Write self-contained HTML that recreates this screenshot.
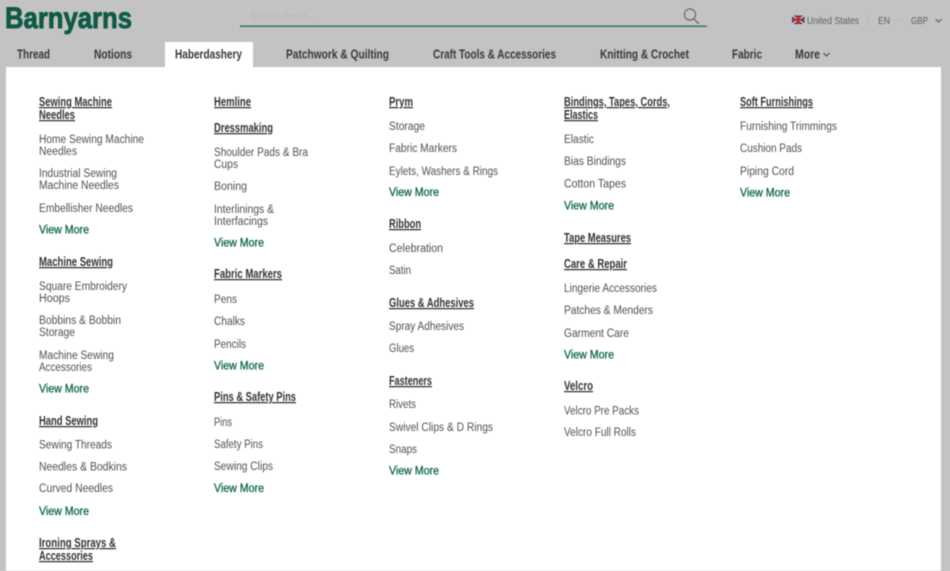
<!DOCTYPE html>
<html lang="en"><head><meta charset="utf-8"><title>Barnyarns</title>
<style>
html,body{margin:0;padding:0;width:950px;height:571px;overflow:hidden;background:#c3c3c3}
svg{display:block;filter:blur(.4px)}
text{font-family:"Liberation Sans",sans-serif;white-space:pre}
.i{font-size:11.5px;fill:#505050}
.h{font-size:12.5px;font-weight:bold;fill:#333;text-decoration:underline}
.v{font-size:11.5px;fill:#0f6650;stroke:#0f6650;stroke-width:.3}
.n{font-size:13px;font-weight:bold;fill:#383838}
.t{font-size:10px;fill:#5f5f5f}
</style></head><body>
<svg xmlns="http://www.w3.org/2000/svg" width="950" height="571" viewBox="0 0 950 571">
<rect width="950" height="571" fill="#c3c3c3"/>
<rect x="6" y="67" width="935" height="504" fill="#fff"/>
<rect x="165" y="42" width="88" height="25" fill="#fff"/>

<text x="5" y="28" font-size="30" font-weight="bold" fill="#0f5a45" textLength="127" lengthAdjust="spacingAndGlyphs" stroke="#0f5a45" stroke-width=".9">Barnyarns</text>
<text x="250" y="19" font-size="10" fill="#b4bab7" textLength="66" lengthAdjust="spacingAndGlyphs">Search items...</text>
<rect x="240" y="25.500" width="467" height="1.400" fill="#2f7059"/>
<circle cx="690" cy="14.500" r="5.600" fill="none" stroke="#5c5c5c" stroke-width="1"/>
<path d="M694 19l5 5" stroke="#5c5c5c" stroke-width="1.200" fill="none"/>

<rect x="792" y="15.500" width="12.500" height="8.500" fill="#2c3a70"/>
<path d="M792 15.500l12.500 8.500M804.500 15.500l-12.500 8.500" stroke="#d8c8cc" stroke-width="1.500"/>
<path d="M798.200 15.500v8.500M792 19.700h12.500" stroke="#c0272d" stroke-width="2.400"/>
<text class="t" x="807" y="24" textLength="52" lengthAdjust="spacingAndGlyphs">United States</text>
<rect x="868" y="15" width="1" height="9" fill="#b5b5b5"/>
<text class="t" x="878" y="24" textLength="12" lengthAdjust="spacingAndGlyphs">EN</text>
<rect x="898" y="20" width="5" height="1" fill="#b5b5b5"/>
<text class="t" x="911" y="24" textLength="17" lengthAdjust="spacingAndGlyphs">GBP</text>
<path d="M935.500 19l3 3 3-3" fill="none" stroke="#555" stroke-width="1"/>

<text class="n" x="17" y="58.500" textLength="33" lengthAdjust="spacingAndGlyphs">Thread</text>
<text class="n" x="94" y="58.500" textLength="38" lengthAdjust="spacingAndGlyphs">Notions</text>
<text class="n" x="175" y="58.500" textLength="67" lengthAdjust="spacingAndGlyphs">Haberdashery</text>
<text class="n" x="286" y="58.500" textLength="103" lengthAdjust="spacingAndGlyphs">Patchwork &amp; Quilting</text>
<text class="n" x="433" y="58.500" textLength="123" lengthAdjust="spacingAndGlyphs">Craft Tools &amp; Accessories</text>
<text class="n" x="600" y="58.500" textLength="89" lengthAdjust="spacingAndGlyphs">Knitting &amp; Crochet</text>
<text class="n" x="732" y="58.500" textLength="30" lengthAdjust="spacingAndGlyphs">Fabric</text>
<text class="n" x="795" y="58.500" textLength="25" lengthAdjust="spacingAndGlyphs">More</text>
<path d="M823.500 53l3 3 3-3" fill="none" stroke="#444" stroke-width="1"/>

<text class="h" x="39" y="106" textLength="73" lengthAdjust="spacingAndGlyphs">Sewing Machine</text>
<text class="h" x="39" y="119" textLength="36" lengthAdjust="spacingAndGlyphs">Needles</text>
<text class="i" x="39" y="143" textLength="105" lengthAdjust="spacingAndGlyphs">Home Sewing Machine</text>
<text class="i" x="39" y="155" textLength="38" lengthAdjust="spacingAndGlyphs">Needles</text>
<text class="i" x="39" y="177" textLength="78" lengthAdjust="spacingAndGlyphs">Industrial Sewing</text>
<text class="i" x="39" y="189" textLength="80" lengthAdjust="spacingAndGlyphs">Machine Needles</text>
<text class="i" x="39" y="212" textLength="94" lengthAdjust="spacingAndGlyphs">Embellisher Needles</text>
<text class="v" x="39" y="233.500" textLength="50" lengthAdjust="spacingAndGlyphs">View More</text>
<text class="h" x="39" y="266" textLength="74" lengthAdjust="spacingAndGlyphs">Machine Sewing</text>
<text class="i" x="39" y="290" textLength="88" lengthAdjust="spacingAndGlyphs">Square Embroidery</text>
<text class="i" x="39" y="302" textLength="31" lengthAdjust="spacingAndGlyphs">Hoops</text>
<text class="i" x="39" y="324" textLength="82" lengthAdjust="spacingAndGlyphs">Bobbins &amp; Bobbin</text>
<text class="i" x="39" y="336" textLength="36" lengthAdjust="spacingAndGlyphs">Storage</text>
<text class="i" x="39" y="359" textLength="75" lengthAdjust="spacingAndGlyphs">Machine Sewing</text>
<text class="i" x="39" y="371" textLength="53" lengthAdjust="spacingAndGlyphs">Accessories</text>
<text class="v" x="39" y="392.500" textLength="50" lengthAdjust="spacingAndGlyphs">View More</text>
<text class="h" x="39" y="425" textLength="59" lengthAdjust="spacingAndGlyphs">Hand Sewing</text>
<text class="i" x="39" y="448.500" textLength="73" lengthAdjust="spacingAndGlyphs">Sewing Threads</text>
<text class="i" x="39" y="470.500" textLength="88" lengthAdjust="spacingAndGlyphs">Needles &amp; Bodkins</text>
<text class="i" x="39" y="492" textLength="74" lengthAdjust="spacingAndGlyphs">Curved Needles</text>
<text class="v" x="39" y="515" textLength="50" lengthAdjust="spacingAndGlyphs">View More</text>
<text class="h" x="39" y="547" textLength="77" lengthAdjust="spacingAndGlyphs">Ironing Sprays &amp;</text>
<text class="h" x="39" y="560" textLength="54" lengthAdjust="spacingAndGlyphs">Accessories</text>

<text class="h" x="214" y="106" textLength="37" lengthAdjust="spacingAndGlyphs">Hemline</text>
<text class="h" x="214" y="132" textLength="59" lengthAdjust="spacingAndGlyphs">Dressmaking</text>
<text class="i" x="214" y="156" textLength="94" lengthAdjust="spacingAndGlyphs">Shoulder Pads &amp; Bra</text>
<text class="i" x="214" y="168" textLength="24" lengthAdjust="spacingAndGlyphs">Cups</text>
<text class="i" x="214" y="190" textLength="33" lengthAdjust="spacingAndGlyphs">Boning</text>
<text class="i" x="214" y="213" textLength="60" lengthAdjust="spacingAndGlyphs">Interlinings &amp;</text>
<text class="i" x="214" y="225" textLength="54" lengthAdjust="spacingAndGlyphs">Interfacings</text>
<text class="v" x="214" y="246.500" textLength="50" lengthAdjust="spacingAndGlyphs">View More</text>
<text class="h" x="214" y="278" textLength="68" lengthAdjust="spacingAndGlyphs">Fabric Markers</text>
<text class="i" x="214" y="303" textLength="23" lengthAdjust="spacingAndGlyphs">Pens</text>
<text class="i" x="214" y="325" textLength="31" lengthAdjust="spacingAndGlyphs">Chalks</text>
<text class="i" x="214" y="348" textLength="32" lengthAdjust="spacingAndGlyphs">Pencils</text>
<text class="v" x="214" y="369.500" textLength="50" lengthAdjust="spacingAndGlyphs">View More</text>
<text class="h" x="214" y="401" textLength="82" lengthAdjust="spacingAndGlyphs">Pins &amp; Safety Pins</text>
<text class="i" x="214" y="426" textLength="18" lengthAdjust="spacingAndGlyphs">Pins</text>
<text class="i" x="214" y="448" textLength="49" lengthAdjust="spacingAndGlyphs">Safety Pins</text>
<text class="i" x="214" y="470" textLength="59" lengthAdjust="spacingAndGlyphs">Sewing Clips</text>
<text class="v" x="214" y="492" textLength="50" lengthAdjust="spacingAndGlyphs">View More</text>

<text class="h" x="389" y="106" textLength="24" lengthAdjust="spacingAndGlyphs">Prym</text>
<text class="i" x="389" y="130" textLength="36" lengthAdjust="spacingAndGlyphs">Storage</text>
<text class="i" x="389" y="152" textLength="68" lengthAdjust="spacingAndGlyphs">Fabric Markers</text>
<text class="i" x="389" y="175" textLength="109" lengthAdjust="spacingAndGlyphs">Eylets, Washers &amp; Rings</text>
<text class="v" x="389" y="196" textLength="50" lengthAdjust="spacingAndGlyphs">View More</text>
<text class="h" x="389" y="228" textLength="32" lengthAdjust="spacingAndGlyphs">Ribbon</text>
<text class="i" x="389" y="252" textLength="54" lengthAdjust="spacingAndGlyphs">Celebration</text>
<text class="i" x="389" y="274" textLength="22" lengthAdjust="spacingAndGlyphs">Satin</text>
<text class="h" x="389" y="307" textLength="85" lengthAdjust="spacingAndGlyphs">Glues &amp; Adhesives</text>
<text class="i" x="389" y="330" textLength="75" lengthAdjust="spacingAndGlyphs">Spray Adhesives</text>
<text class="i" x="389" y="352" textLength="25" lengthAdjust="spacingAndGlyphs">Glues</text>
<text class="h" x="389" y="385" textLength="43" lengthAdjust="spacingAndGlyphs">Fasteners</text>
<text class="i" x="389" y="408" textLength="27" lengthAdjust="spacingAndGlyphs">Rivets</text>
<text class="i" x="389" y="431" textLength="104" lengthAdjust="spacingAndGlyphs">Swivel Clips &amp; D Rings</text>
<text class="i" x="389" y="453" textLength="28" lengthAdjust="spacingAndGlyphs">Snaps</text>
<text class="v" x="389" y="474.500" textLength="50" lengthAdjust="spacingAndGlyphs">View More</text>

<text class="h" x="564" y="106" textLength="106" lengthAdjust="spacingAndGlyphs">Bindings, Tapes, Cords,</text>
<text class="h" x="564" y="119" textLength="34" lengthAdjust="spacingAndGlyphs">Elastics</text>
<text class="i" x="564" y="143" textLength="30" lengthAdjust="spacingAndGlyphs">Elastic</text>
<text class="i" x="564" y="165" textLength="62" lengthAdjust="spacingAndGlyphs">Bias Bindings</text>
<text class="i" x="564" y="187.500" textLength="62" lengthAdjust="spacingAndGlyphs">Cotton Tapes</text>
<text class="v" x="564" y="209.500" textLength="50" lengthAdjust="spacingAndGlyphs">View More</text>
<text class="h" x="564" y="242" textLength="67" lengthAdjust="spacingAndGlyphs">Tape Measures</text>
<text class="h" x="564" y="268" textLength="63" lengthAdjust="spacingAndGlyphs">Care &amp; Repair</text>
<text class="i" x="564" y="292" textLength="93" lengthAdjust="spacingAndGlyphs">Lingerie Accessories</text>
<text class="i" x="564" y="314" textLength="89" lengthAdjust="spacingAndGlyphs">Patches &amp; Menders</text>
<text class="i" x="564" y="337" textLength="65" lengthAdjust="spacingAndGlyphs">Garment Care</text>
<text class="v" x="564" y="358.500" textLength="50" lengthAdjust="spacingAndGlyphs">View More</text>
<text class="h" x="564" y="390" textLength="29" lengthAdjust="spacingAndGlyphs">Velcro</text>
<text class="i" x="564" y="414.500" textLength="75" lengthAdjust="spacingAndGlyphs">Velcro Pre Packs</text>
<text class="i" x="564" y="436" textLength="72" lengthAdjust="spacingAndGlyphs">Velcro Full Rolls</text>

<text class="h" x="740" y="106" textLength="73" lengthAdjust="spacingAndGlyphs">Soft Furnishings</text>
<text class="i" x="740" y="130" textLength="97" lengthAdjust="spacingAndGlyphs">Furnishing Trimmings</text>
<text class="i" x="740" y="152" textLength="62" lengthAdjust="spacingAndGlyphs">Cushion Pads</text>
<text class="i" x="740" y="175" textLength="54" lengthAdjust="spacingAndGlyphs">Piping Cord</text>
<text class="v" x="740" y="196.500" textLength="50" lengthAdjust="spacingAndGlyphs">View More</text>
</svg>
</body></html>
